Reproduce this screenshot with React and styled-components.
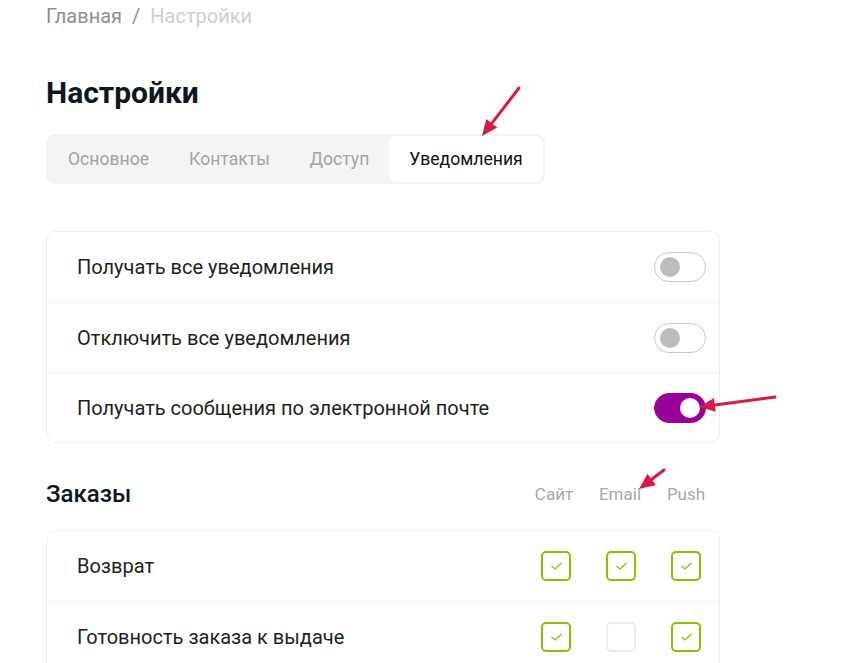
import React from "react";
import styled, { createGlobalStyle } from "styled-components";

const Global = createGlobalStyle`
  body {
    margin: 0;
    background: #fff;
    font-family: Roboto, "Noto Sans", sans-serif;
    color: #1c1f24;
  }
`;

const Page = styled.div`
  position: relative;
  width: 863px;
  height: 663px;
  overflow: hidden;
  padding: 4px 0 0 46px;
  box-sizing: border-box;
`;

const Crumbs = styled.div`
  display: flex;
  gap: 10px;
  font-size: 20px;
  line-height: 24px;
  color: #8f8f8f;
`;

const CrumbCurrent = styled.span`
  color: #cfcfcf;
`;

const Title = styled.h1`
  margin: 47px 0 0;
  font-size: 30px;
  line-height: 36px;
  font-weight: 700;
  color: #0e1620;
`;

const Tabs = styled.div`
  display: inline-flex;
  margin-top: 23px;
  padding: 2px;
  background: #f4f4f4;
  border-radius: 9px;
`;

const Tab = styled.div`
  padding: 0 20px;
  height: 46px;
  display: flex;
  align-items: center;
  font-size: 17.6px;
  color: ${(p) => (p.$active ? "#111" : "#a3a3a3")};
  background: ${(p) => (p.$active ? "#fff" : "transparent")};
  border-radius: 8px;
`;

const Card = styled.div`
  width: 674px;
  box-sizing: border-box;
  border: 1px solid #eeeeee;
  border-radius: 10px;
  margin-top: ${(p) => p.$mt}px;
`;

const Row = styled.div`
  height: 70px;
  display: flex;
  align-items: center;
  justify-content: space-between;
  padding: 0 13px 0 30px;
  border-top: ${(p) => (p.$first ? "none" : "1px solid #f0f0f0")};
  box-sizing: border-box;
  font-size: 20px;
  color: #1d1f22;
`;

const Toggle = styled.div`
  width: 52px;
  height: 30px;
  box-sizing: border-box;
  border-radius: 15px;
  border: 1px solid ${(p) => (p.$on ? "#990099" : "#c8c8c8")};
  background: ${(p) => (p.$on ? "#990099" : "#fff")};
  display: flex;
  align-items: center;
  justify-content: ${(p) => (p.$on ? "flex-end" : "flex-start")};
  padding: 0 5px;
`;

const Knob = styled.div`
  width: 20px;
  height: 20px;
  border-radius: 50%;
  background: ${(p) => (p.$on ? "#fff" : "#bcbcbc")};
`;

const SectionHead = styled.div`
  width: 674px;
  display: flex;
  align-items: center;
  justify-content: space-between;
  margin-top: 36px;
  padding-right: 1px;
  box-sizing: border-box;
  height: 30px;
`;

const SectionTitle = styled.h2`
  margin: 0;
  font-size: 24px;
  font-weight: 500;
  color: #0e1620;
`;

const Cols = styled.div`
  display: flex;
`;

const ColLabel = styled.div`
  width: 66px;
  text-align: center;
  font-size: 17px;
  color: #a8a8a8;
`;

const Checks = styled.div`
  display: flex;
  gap: 35px;
  padding-right: 5px;
`;

const Box = styled.div`
  width: 30px;
  height: 30px;
  box-sizing: border-box;
  border: 2px solid ${(p) => (p.$on ? "#8cbf00" : "#ececec")};
  border-radius: 5px;
  display: flex;
  align-items: center;
  justify-content: center;
`;

const Arrow = styled.svg`
  position: absolute;
  left: 0;
  top: 0;
  pointer-events: none;
`;

function Check({ on }) {
  return (
    <Box $on={on}>
      {on && (
        <svg width="13" height="10" viewBox="0 0 13 10">
          <path d="M1.5 5 L5 8 L11.5 2" fill="none" stroke="#8cbf00" strokeWidth="1.3" />
        </svg>
      )}
    </Box>
  );
}

const toggles = [
  { label: "Получать все уведомления", on: false },
  { label: "Отключить все уведомления", on: false },
  { label: "Получать сообщения по электронной почте", on: true },
];

const orders = [
  { label: "Возврат", v: [true, true, true] },
  { label: "Готовность заказа к выдаче", v: [true, false, true] },
];

function ArrowHead({ x1, y1, x2, y2 }) {
  const a = Math.atan2(y2 - y1, x2 - x1);
  const len = 16;
  const w = 7;
  const bx = x2 - len * Math.cos(a);
  const by = y2 - len * Math.sin(a);
  const px = -Math.sin(a) * w;
  const py = Math.cos(a) * w;
  return (
    <g>
      <line x1={x1} y1={y1} x2={bx} y2={by} stroke="#d81b45" strokeWidth="3" strokeLinecap="round" />
      <polygon points={`${x2},${y2} ${bx + px},${by + py} ${bx - px},${by - py}`} fill="#d81b45" />
    </g>
  );
}

export default function App() {
  return (
    <Page>
      <Global />
      <Crumbs>
        <span>Главная</span>
        <span>/</span>
        <CrumbCurrent>Настройки</CrumbCurrent>
      </Crumbs>
      <Title>Настройки</Title>
      <Tabs>
        <Tab>Основное</Tab>
        <Tab>Контакты</Tab>
        <Tab>Доступ</Tab>
        <Tab $active>Уведомления</Tab>
      </Tabs>

      <Card $mt={47}>
        {toggles.map((t, i) => (
          <Row key={t.label} $first={i === 0}>
            <span>{t.label}</span>
            <Toggle $on={t.on}>
              <Knob $on={t.on} />
            </Toggle>
          </Row>
        ))}
      </Card>

      <SectionHead>
        <SectionTitle>Заказы</SectionTitle>
        <Cols>
          <ColLabel>Сайт</ColLabel>
          <ColLabel>Email</ColLabel>
          <ColLabel>Push</ColLabel>
        </Cols>
      </SectionHead>

      <Card $mt={21}>
        {orders.map((o, i) => (
          <Row key={o.label} $first={i === 0}>
            <span>{o.label}</span>
            <Checks>
              {o.v.map((on, j) => (
                <Check key={j} on={on} />
              ))}
            </Checks>
          </Row>
        ))}
      </Card>

      <Arrow width="863" height="663">
        <ArrowHead x1={519} y1={88} x2={482} y2={136} />
        <ArrowHead x1={775} y1={397} x2={699} y2={407} />
        <ArrowHead x1={664} y1={470} x2={639} y2={489} />
      </Arrow>
    </Page>
  );
}
